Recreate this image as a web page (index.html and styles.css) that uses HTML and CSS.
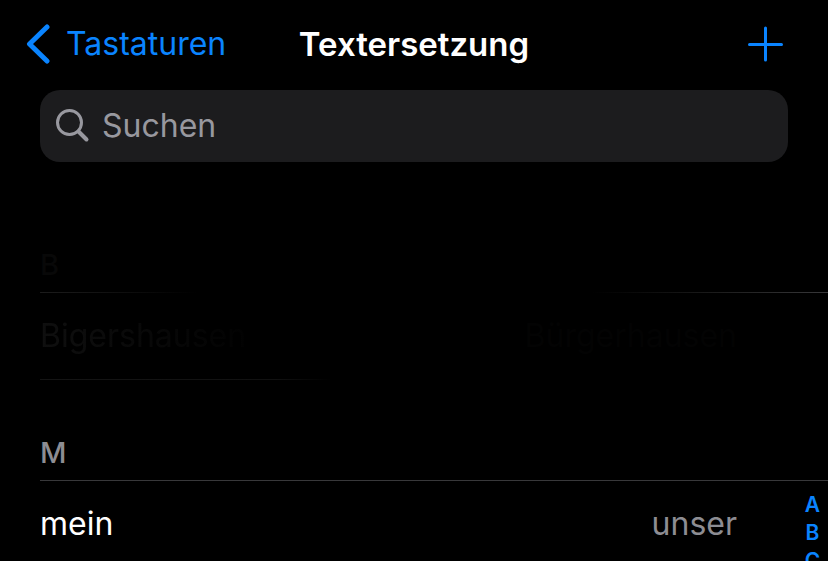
FILE: index.html
```html
<!DOCTYPE html>
<html lang="de">

<head>
    <meta charset="UTF-8">
    <meta name="viewport" content="width=device-width, initial-scale=1.0">
    <title>Textersetzung</title>
    <link rel="stylesheet" href="styles.css">
</head>

<body>

    <header class="navbar">
        <a class="back" href="#">
            <svg width="24" height="40" viewBox="0 0 24 40" aria-hidden="true">
                <path d="M21 3 L3.5 20 L21 37" />
            </svg>
            Tastaturen
        </a>
        <h1>Textersetzung</h1>
        <button class="add" type="button" aria-label="Hinzufügen">
            <svg width="36" height="36" viewBox="0 0 36 36" aria-hidden="true">
                <path d="M17.5 2 V34 M1.5 18.5 H33.5" />
            </svg>
        </button>
    </header>

    <label class="search">
        <svg width="34" height="34" viewBox="0 0 34 34" aria-hidden="true">
            <circle cx="13.5" cy="13.5" r="12" />
            <path d="M22.5 22.5 L30.5 30.5" stroke-width="4" />
        </svg>
        <input type="search" placeholder="Suchen" aria-label="Suchen">
    </label>

    <main class="list">
        <section class="faded">
            <h2>B</h2>
            <div class="row">
                <span class="phrase">Bigershausen</span>
                <span class="shortcut">Bürgerhausen</span>
            </div>
        </section>

        <section>
            <h2>M</h2>
            <div class="row">
                <span class="phrase">mein</span>
                <span class="shortcut">unser</span>
            </div>
        </section>

        <nav class="index" aria-label="Index">
            <a href="#">A</a>
            <a href="#">B</a>
            <a href="#">C</a>
        </nav>
    </main>

</body>

</html>
```
FILE: styles.css
```css
* {
    box-sizing: border-box;
}

body {
    display: flex;
    flex-direction: column;
    height: 100vh;
    margin: 0;
    overflow: hidden;
    background-color: #000;
    color: #fff;
    font-family: Inter, "Liberation Sans", sans-serif;
    font-size: 32px;
    line-height: 40px;
}

svg {
    display: block;
    flex: none;
    fill: none;
    stroke: currentColor;
    stroke-linecap: round;
    stroke-linejoin: round;
}

/* top bar */
.navbar {
    display: grid;
    grid-template-columns: 1fr auto 1fr;
    align-items: center;
    flex: none;
    height: 90px;
    padding: 0 26px 2px;
}

.back {
    display: flex;
    align-items: center;
    gap: 16px;
    color: #0a84ff;
    text-decoration: none;
}

.back svg {
    stroke-width: 5;
}

h1 {
    margin: 0;
    font-size: 33px;
    font-weight: 600;
}

.add {
    justify-self: end;
    margin-right: 18px;
    padding: 0;
    border: 0;
    background: none;
    color: #0a84ff;
}

.add svg {
    stroke-width: 3;
}

/* search field */
.search {
    display: flex;
    align-items: center;
    gap: 12px;
    flex: none;
    height: 72px;
    margin: 0 40px;
    padding: 0 16px;
    border-radius: 20px;
    background-color: #1c1c1e;
    color: #98989f;
}

.search svg {
    stroke-width: 3;
}

.search input {
    flex: 1;
    min-width: 0;
    padding: 0;
    border: 0;
    outline: none;
    background: none;
    color: #fff;
    font: inherit;
}

.search input::placeholder {
    color: #98989f;
    opacity: 1;
}

/* list */
.list {
    position: relative;
    flex: 1;
    min-height: 0;
    padding-top: 30px;
    overflow: hidden;
}

section {
    padding-left: 40px;
}

h2 {
    display: flex;
    align-items: flex-end;
    height: 101px;
    margin: 0;
    padding-bottom: 7px;
    border-bottom: 1px solid #38383a;
    color: #8d8d93;
    font-size: 29px;
    font-weight: 500;
}

.row {
    display: flex;
    align-items: center;
    justify-content: space-between;
    height: 87px;
    padding-right: 91px;
    border-bottom: 1px solid #38383a;
}

.shortcut {
    color: #8d8d93;
}

/* group that is fading out */
.faded h2 {
    border-image: linear-gradient(to right, #1c1c1c, #0c0c0c 12%, #000 20%, #000 70%, #1a1a1a 85%, #38383a) 1;
    color: #080808;
}

.faded .row {
    border-image: linear-gradient(to right, #141414, #111 30%, #000 37%) 1;
}

.faded .phrase {
    background: linear-gradient(to right, #0f0f0f, #020202);
    background-clip: text;
    color: transparent;
}

.faded .shortcut {
    color: #030303;
}

/* letter index on the right edge */
.index {
    position: absolute;
    top: 329px;
    right: 0;
    display: flex;
    flex-direction: column;
    width: 31px;
    text-align: center;
}

.index a {
    color: #0a84ff;
    font-size: 21px;
    font-weight: 600;
    line-height: 28px;
    text-decoration: none;
}
```
